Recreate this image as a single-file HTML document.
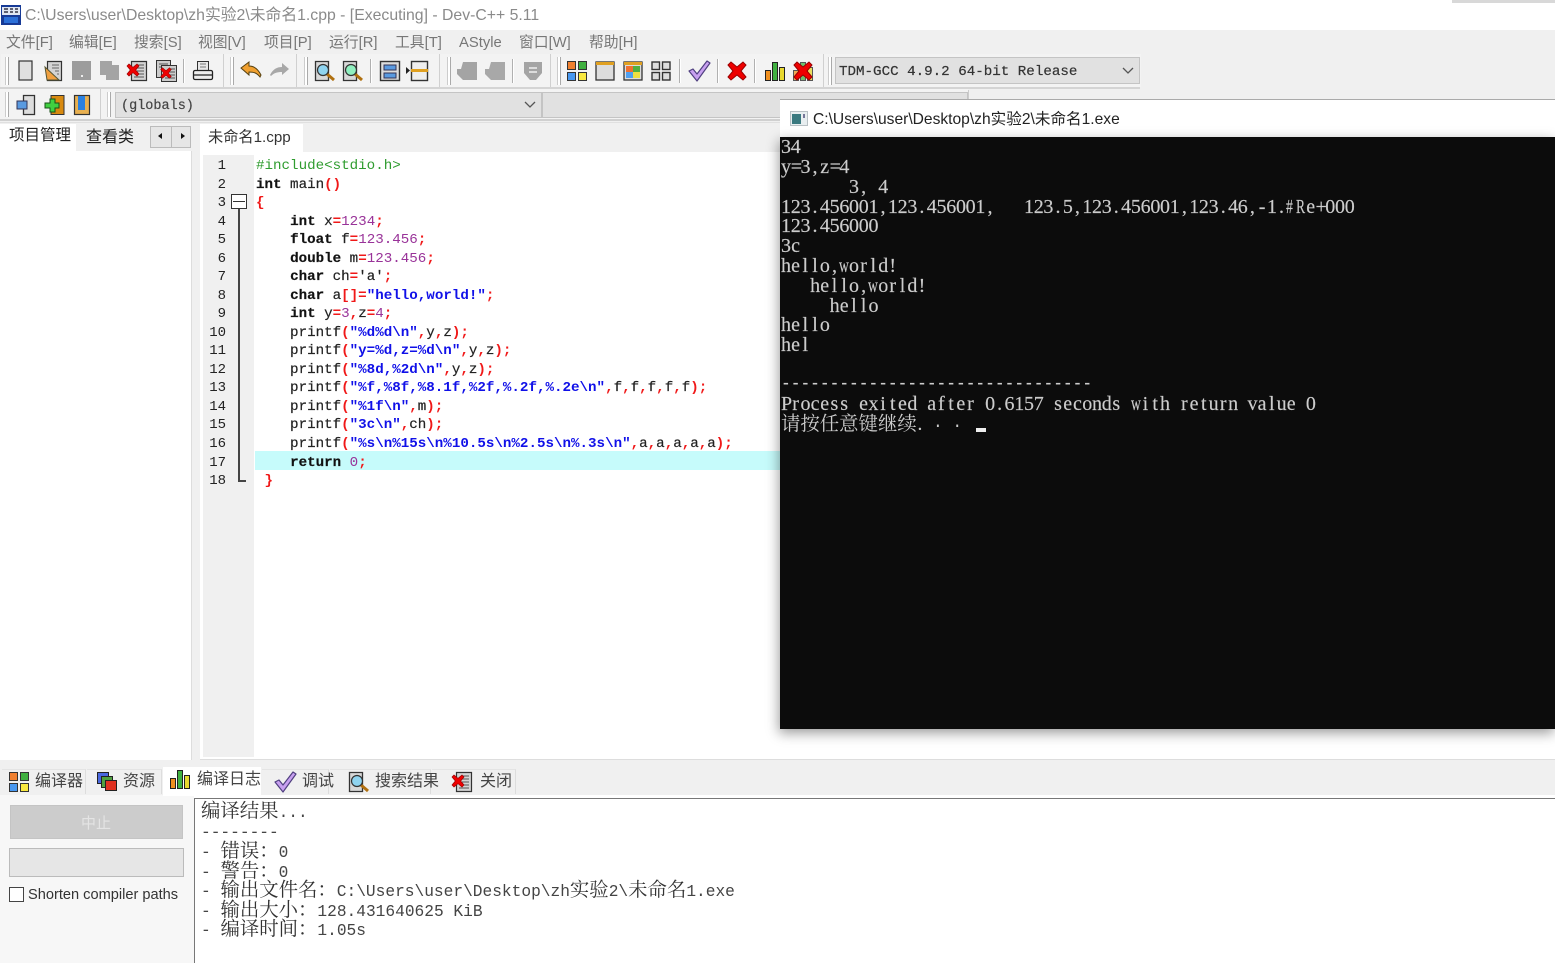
<!DOCTYPE html>
<html lang="zh"><head><meta charset="utf-8"><title>Dev-C++ 5.11</title>
<style>
html,body{margin:0;padding:0}
body{width:1555px;height:963px;overflow:hidden;background:#f0f0f0;position:relative;font-family:"Liberation Sans","Noto Sans CJK SC",sans-serif}
.a{position:absolute;white-space:pre}
svg.i{position:absolute;width:24px;height:24px;overflow:visible}
.m{top:34px;font-size:14.8px;color:#777;line-height:18px}
.sep{position:absolute;width:1px;background:#b0b0b0;height:24px;box-shadow:1px 0 0 #fff}
.grip{position:absolute;width:2px;background:#fff;border-right:1px solid #aaa;border-left:1px solid #ccc}
.end{position:absolute;width:1px;background:#d0d0d0;top:54px;height:33px}
.c{position:absolute;left:256px;font:14.2px/18.53px "Liberation Mono",monospace;color:#222;white-space:pre;-webkit-text-stroke:.2px #222}
.n{position:absolute;left:203px;width:23px;text-align:right;white-space:pre;font:14px/18.53px "Liberation Mono",monospace;color:#222}
b{font-weight:700;color:#111}
.s{color:#1010e8;font-weight:700;-webkit-text-stroke:0}.r{color:#f01818;font-weight:700;-webkit-text-stroke:0}.p{color:#993399;font-weight:400;-webkit-text-stroke:0}
.con{position:absolute;left:781px;font:20px/20px "Liberation Serif",serif;color:#ccc;white-space:pre;-webkit-text-stroke:.15px #ccc}
.con i,.con u{font-style:normal;text-decoration:none;display:inline-block;width:9.72px;text-align:center;white-space:pre}
.con u{text-align:left;transform:scaleX(.68);transform-origin:0 50%}
.dash{position:absolute;left:781px;font:20px/20px "Liberation Mono",monospace;color:#ccc;white-space:pre;transform:scaleX(.81);transform-origin:0 0}
.log{position:absolute;left:201px;font:16.2px/20px "Liberation Mono",monospace;color:#444;white-space:pre}
.log span{font:19.4px/0 "Noto Serif CJK SC",serif;color:#333}
.t{font-size:16px;color:#444;top:771px;line-height:20px}
.tabb{position:absolute;top:769px;height:25px;background:#f0f0f0;border-right:1px solid #ddd;border-top:1px solid #e4e4e4;box-sizing:border-box}
</style></head><body>
<svg width="0" height="0" style="position:absolute"><defs>
<symbol id="grid" viewBox="0 0 24 24"><g stroke="#333" stroke-width="1"><rect x="2.5" y="2.5" width="8" height="8" fill="#f08030"/><rect x="13.5" y="2.5" width="8" height="8" fill="#40b040"/><rect x="2.5" y="13.5" width="8" height="8" fill="#4898f0"/><rect x="13.5" y="13.5" width="8" height="8" fill="#f8e840"/></g></symbol>
<symbol id="bars" viewBox="0 0 24 24"><g stroke="#222" stroke-width="1"><rect x="2.5" y="11.5" width="5" height="10" fill="#f09020"/><rect x="9.5" y="3.5" width="5" height="18" fill="#40b040"/><rect x="16.5" y="8.5" width="5" height="13" fill="#e8d830"/></g></symbol>
<symbol id="check" viewBox="0 0 24 24"><path d="M2 12l4-2 4 5L20 2l3 2L10 22z" fill="#c8a0f0" stroke="#504080" stroke-width="1.2" stroke-linejoin="round"/></symbol>
<symbol id="x" viewBox="0 0 24 24"><path d="M3 6l3-3 6 5 6-5 3 3-5 6 5 6-3 3-6-5-6 5-3-3 5-6z" fill="#ee0000" stroke="#900" stroke-width="1"/></symbol>
<symbol id="doc" viewBox="0 0 24 24"><path d="M6.5 2.5h15v19h-15z" fill="#d4d4d4" stroke="#333" stroke-width="1.200"/><path d="M12 6h7M12 9h7M12 12h7M12 15h7M9 18h10" stroke="#555"/></symbol>
<symbol id="find" viewBox="0 0 24 24"><path d="M3.500 2.500h13v19h-13z" fill="#d8d8d8" stroke="#333" stroke-width="1.300"/><path d="M15 15l7 6" stroke="#b07010" stroke-width="3"/><circle cx="11" cy="11" r="5.500" fill="currentColor" stroke="#333" stroke-width="1.200"/></symbol>
</defs></svg>

<!-- title bar -->
<div class="a" style="left:0;top:0;width:1555px;height:30px;background:#fff"></div>
<div class="a" style="left:1452px;top:0;width:103px;height:3px;background:#d8d8d8"></div>
<svg class="i" style="left:1px;top:5px;width:20px;height:20px" viewBox="0 0 20 20"><rect width="20" height="20" fill="#173a96"/><rect x="1" y="2" width="18" height="8" fill="#dfe6f2"/><rect x="3" y="12" width="14" height="6" fill="#2c70d8"/><path d="M3 4h4M9 4h3M14 4h3M3 7h4M9 7h3M14 7h3" stroke="#334" stroke-width="1.500"/></svg>
<div class="a" style="left:25px;top:6px;font-size:15.8px;line-height:19px;color:#8a8a8a">C:\Users\user\Desktop\zh实验2\未命名1.cpp - [Executing] - Dev-C++ 5.11</div>

<!-- menu -->
<div class="a m" style="left:6px">文件[F]</div><div class="a m" style="left:69px">编辑[E]</div><div class="a m" style="left:134px">搜索[S]</div><div class="a m" style="left:198px">视图[V]</div><div class="a m" style="left:264px">项目[P]</div><div class="a m" style="left:329px">运行[R]</div><div class="a m" style="left:395px">工具[T]</div><div class="a m" style="left:459px">AStyle</div><div class="a m" style="left:519px">窗口[W]</div><div class="a m" style="left:589px">帮助[H]</div>

<!-- toolbar 1 -->
<div class="a" style="left:0;top:87px;width:1140px;height:2px;background:#d4d4d4"></div>
<div class="a" style="left:0;top:119px;width:968px;height:2px;background:#d0d0d0"></div>
<div class="a" style="left:968px;top:90px;width:1px;height:30px;background:#ccc"></div>
<div class="a" style="left:1px;top:54px;width:1140px;height:33px;background:#f3f3f3"></div>
<div class="grip" style="left:5px;top:57px;height:28px"></div><div class="grip" style="left:230px;top:57px;height:28px"></div><div class="grip" style="left:304px;top:57px;height:28px"></div><div class="grip" style="left:447px;top:57px;height:28px"></div><div class="grip" style="left:557px;top:57px;height:28px"></div><div class="grip" style="left:828px;top:57px;height:28px"></div>
<div class="end" style="left:223px"></div><div class="end" style="left:296px"></div><div class="end" style="left:439px"></div><div class="end" style="left:550px"></div><div class="end" style="left:823px"></div>
<div class="sep" style="left:183px;top:59px"></div><div class="sep" style="left:370px;top:59px"></div><div class="sep" style="left:512px;top:59px"></div><div class="sep" style="left:679px;top:59px"></div><div class="sep" style="left:717px;top:59px"></div><div class="sep" style="left:754px;top:59px"></div>

<svg class="i" style="left:13px;top:59px" viewBox="0 0 24 24"><rect x="6" y="2" width="13" height="19" fill="#e0e0e0" stroke="#333" stroke-width="1.200"/></svg>
<svg class="i" style="left:41px;top:59px" viewBox="0 0 24 24"><path d="M6.500 2.500h14v19h-14z" fill="#d4d4d4" stroke="#333" stroke-width="1.200"/><path d="M11 6h7M11 9h7M14 12h4M16 15h2" stroke="#666"/><path d="M4 8l14 13H6z" fill="#f0a040" stroke="#553" stroke-width="1"/></svg>
<svg class="i" style="left:69px;top:59px" viewBox="0 0 24 24"><path d="M3 2h19v19H3z" fill="#9c9c9c"/><rect x="12" y="16" width="2" height="2" fill="#eee"/></svg>
<svg class="i" style="left:97px;top:59px" viewBox="0 0 24 24"><path d="M3 2h12v4h7v15H9v-5H3z" fill="#a4a4a4"/></svg>
<svg class="i" style="left:125px;top:59px" viewBox="0 0 24 24"><use href="#doc"/><use href="#x" x="0" y="3" width="16" height="16"/></svg>
<svg class="i" style="left:154px;top:59px" viewBox="0 0 24 24"><path d="M2.500 1.500h14v17h-14z" fill="#ccc" stroke="#333"/><path d="M5 5h9M5 8h3" stroke="#555"/><path d="M7.500 6.500h15v16h-15z" fill="#ccc" stroke="#333"/><path d="M15 10h6M15 13h6M15 16h6M11 19h10" stroke="#555"/><use href="#x" x="5" y="7" width="14" height="14"/></svg>
<svg class="i" style="left:191px;top:59px" viewBox="0 0 24 24"><path d="M6.500 2.500h11v9h-11z" fill="#e8e8e8" stroke="#333"/><path d="M9 5h6M9 8h6" stroke="#777"/><rect x="2.500" y="11.500" width="19" height="9" rx="1.500" fill="#eee" stroke="#222" stroke-width="1.300"/><path d="M3 16h18" stroke="#222" stroke-width="1.300"/></svg>
<svg class="i" style="left:239px;top:59px" viewBox="0 0 24 24"><path d="M2 9l8-6v4c5 0 9 3 12 9l-1 2c-3-4-6-5-11-5v3z" fill="#f0a030" stroke="#554010" stroke-width="1"/></svg>
<svg class="i" style="left:267px;top:59px" viewBox="0 0 24 24"><path d="M22 10l-7-6v4C10 8 6 10 3 16l1 1c3-3 6-4 11-4v3z" fill="#a8a8a8"/></svg>
<svg class="i" style="left:312px;top:59px;color:#8fd4f0" viewBox="0 0 24 24"><use href="#find"/></svg>
<svg class="i" style="left:340px;top:59px;color:#90f0c0" viewBox="0 0 24 24"><use href="#find"/></svg>
<svg class="i" style="left:378px;top:59px" viewBox="0 0 24 24"><rect x="2.500" y="2.500" width="19" height="19" fill="#ddd" stroke="#333" stroke-width="1.400"/><rect x="6" y="6" width="12" height="5" fill="#5a9ae0" stroke="#335"/><rect x="6" y="14" width="12" height="5" fill="#5a9ae0" stroke="#335"/></svg>
<svg class="i" style="left:406px;top:59px" viewBox="0 0 24 24"><rect x="5.500" y="2.500" width="16" height="19" fill="#eee" stroke="#333" stroke-width="1.400"/><rect x="5" y="10" width="17" height="3" fill="#e0a020"/><path d="M0 8l4 3.500L0 15z" fill="#222"/></svg>
<svg class="i" style="left:455px;top:59px" viewBox="0 0 24 24"><path d="M8 3h14v18H8l-6-6v-5l4 0z" fill="#a4a4a4"/></svg>
<svg class="i" style="left:483px;top:59px" viewBox="0 0 24 24"><path d="M8 3h14v18H8l-6-6v-5l4 0z" fill="#a8a8a8"/></svg>
<svg class="i" style="left:521px;top:59px" viewBox="0 0 24 24"><path d="M3 3h18v11l-6 7H9l-6-7z" fill="#a4a4a4"/><path d="M8 9h8M8 13h8" stroke="#eee" stroke-width="1.500"/></svg>
<svg class="i" style="left:565px;top:59px"><use href="#grid"/></svg>
<svg class="i" style="left:593px;top:59px" viewBox="0 0 24 24"><rect x="3" y="3" width="18" height="18" fill="#ddd" stroke="#333" stroke-width="1.300"/><rect x="3" y="3" width="18" height="3" fill="#e0a020"/></svg>
<svg class="i" style="left:621px;top:59px" viewBox="0 0 24 24"><rect x="3" y="3" width="18" height="18" fill="#ddd" stroke="#333" stroke-width="1.300"/><rect x="3" y="3" width="18" height="3" fill="#e0a020"/><rect x="5" y="7" width="7" height="6" fill="#f07030"/><rect x="12" y="7" width="7" height="6" fill="#50b040"/><rect x="5" y="13" width="7" height="6" fill="#50a0f0"/><rect x="12" y="13" width="7" height="6" fill="#f0e040"/></svg>
<svg class="i" style="left:649px;top:59px" viewBox="0 0 24 24"><g fill="#ddd" stroke="#333" stroke-width="1.400"><rect x="3" y="3" width="7.500" height="7.500"/><rect x="13.500" y="3" width="7.500" height="7.500"/><rect x="3" y="13.500" width="7.500" height="7.500"/><rect x="13.500" y="13.500" width="7.500" height="7.500"/></g></svg>
<svg class="i" style="left:687px;top:59px"><use href="#check"/></svg>
<svg class="i" style="left:725px;top:59px"><use href="#x"/></svg>
<svg class="i" style="left:763px;top:59px"><use href="#bars"/></svg>
<svg class="i" style="left:791px;top:59px" viewBox="0 0 24 24"><use href="#bars" opacity=".75"/><use href="#x"/></svg>

<div class="a" style="left:835px;top:57px;width:305px;height:27px;background:#e1e1e1;border:1px solid #c4c4c4;box-sizing:border-box"></div>
<div class="a" style="left:839px;top:63px;font:14.2px/18px 'Liberation Mono',monospace;color:#333;-webkit-text-stroke:.2px #333">TDM-GCC 4.9.2 64-bit Release</div>
<svg class="i" style="left:1122px;top:66px;width:12px;height:10px" viewBox="0 0 12 10"><path d="M1 2l5 5 5-5" fill="none" stroke="#555" stroke-width="1.300"/></svg>

<!-- toolbar 2 -->
<div class="a" style="left:0;top:89px;width:968px;height:30px;background:#f3f3f3"></div>
<div class="grip" style="left:5px;top:92px;height:25px"></div><div class="a" style="left:100px;top:89px;width:1px;height:30px;background:#d0d0d0"></div><div class="grip" style="left:107px;top:92px;height:25px"></div>
<svg class="i" style="left:14px;top:93px" viewBox="0 0 24 24"><path d="M9.500 2.500h11v19h-11z" fill="#ddd" stroke="#333" stroke-width="1.300"/><rect x="3" y="8" width="10" height="8" fill="#5a9ae0" stroke="#335"/></svg>
<svg class="i" style="left:43px;top:93px" viewBox="0 0 24 24"><rect x="8" y="2.500" width="13" height="19" fill="#d88a10" stroke="#333"/><path d="M7 6h5v4h4v5h-4v4H7v-4H2v-5h5z" fill="#40d040" stroke="#185018"/></svg>
<svg class="i" style="left:70px;top:93px" viewBox="0 0 24 24"><rect x="4.500" y="2.500" width="15" height="19" fill="#e8b050" stroke="#333" stroke-width="1.200"/><rect x="8" y="3" width="7" height="14" fill="#2a80e0"/></svg>
<div class="a" style="left:115px;top:92px;width:427px;height:26px;background:#e1e1e1;border:1px solid #c4c4c4;box-sizing:border-box"></div>
<div class="a" style="left:542px;top:92px;width:426px;height:26px;background:#e1e1e1;border:1px solid #c4c4c4;box-sizing:border-box"></div>
<div class="a" style="left:121px;top:98px;font:13.5px/18px 'Liberation Mono',monospace;color:#444;-webkit-text-stroke:.2px #444">(globals)</div>
<svg class="i" style="left:524px;top:100px;width:12px;height:10px" viewBox="0 0 12 10"><path d="M1 2l5 5 5-5" fill="none" stroke="#555" stroke-width="1.300"/></svg>

<!-- left panel and tabs -->
<div class="a" style="left:0;top:122px;width:1555px;height:1px;background:#e0e0e0"></div>
<div class="a" style="left:0;top:124px;width:76px;height:28px;background:#fff"></div>
<div class="a" style="left:9px;top:126px;font-size:15.5px;line-height:20px;color:#222">项目管理</div>
<div class="a" style="left:86px;top:128px;font-size:16px;line-height:20px;color:#222">查看类</div>
<div class="a" style="left:150px;top:126px;width:41px;height:22px;background:#e6e6e6;border:1px solid #bbb;box-sizing:border-box"></div>
<div class="a" style="left:171px;top:126px;width:1px;height:22px;background:#bbb"></div>
<div class="a" style="left:158px;top:133px;width:0;height:0;border:3.500px solid transparent;border-right:4px solid #111;border-left:0"></div>
<div class="a" style="left:181px;top:133px;width:0;height:0;border:3.500px solid transparent;border-left:4px solid #111;border-right:0"></div>
<div class="a" style="left:200px;top:124px;width:103px;height:28px;background:#fff"></div>
<div class="a" style="left:208px;top:128px;font-size:15.2px;line-height:20px;color:#333">未命名1.cpp</div>
<div class="a" style="left:0;top:151px;width:191px;height:609px;background:#fff;border-right:1px solid #ddd"></div>

<!-- editor -->
<div class="a" style="left:200px;top:152px;width:1355px;height:608px;background:#fff;border-bottom:1px solid #ddd;box-sizing:border-box"></div>
<div class="a" style="left:203px;top:155px;width:51px;height:602px;background:#f0f0f0"></div>
<div class="a" style="left:255px;top:451px;width:525px;height:19px;background:#c6fbfb"></div>
<div class="n" style="top:157px">1
2
3
4
5
6
7
8
9
10
11
12
13
14
15
16
17
18</div>
<div class="a" style="left:231px;top:194px;width:16px;height:15px;background:#fff;border:1.500px solid #333;box-sizing:border-box"></div>
<div class="a" style="left:233px;top:200.5px;width:12px;height:1.3px;background:#333"></div>
<div class="a" style="left:238px;top:209px;width:1.5px;height:271px;background:#444"></div>
<div class="a" style="left:238px;top:480px;width:8px;height:1.5px;background:#444"></div>
<div class="c" style="top:157px"><span style="color:#2f9c2f;-webkit-text-stroke:0">#include&lt;stdio.h&gt;</span>
<b>int</b> main<span class="r">()</span>
<span class="r">{</span>
    <b>int</b> x<span class="r">=</span><span class="p">1234</span><span class="r">;</span>
    <b>float</b> f<span class="r">=</span><span class="p">123.456</span><span class="r">;</span>
    <b>double</b> m<span class="r">=</span><span class="p">123.456</span><span class="r">;</span>
    <b>char</b> ch<span class="r">=</span>'a'<span class="r">;</span>
    <b>char</b> a<span class="r">[]=</span><span class="s">"hello,world!"</span><span class="r">;</span>
    <b>int</b> y<span class="r">=</span><span class="p">3</span><span class="r">,</span>z<span class="r">=</span><span class="p">4</span><span class="r">;</span>
    printf<span class="r">(</span><span class="s">"%d%d\n"</span><span class="r">,</span>y<span class="r">,</span>z<span class="r">);</span>
    printf<span class="r">(</span><span class="s">"y=%d,z=%d\n"</span><span class="r">,</span>y<span class="r">,</span>z<span class="r">);</span>
    printf<span class="r">(</span><span class="s">"%8d,%2d\n"</span><span class="r">,</span>y<span class="r">,</span>z<span class="r">);</span>
    printf<span class="r">(</span><span class="s">"%f,%8f,%8.1f,%2f,%.2f,%.2e\n"</span><span class="r">,</span>f<span class="r">,</span>f<span class="r">,</span>f<span class="r">,</span>f<span class="r">,</span>f<span class="r">);</span>
    printf<span class="r">(</span><span class="s">"%1f\n"</span><span class="r">,</span>m<span class="r">);</span>
    printf<span class="r">(</span><span class="s">"3c\n"</span><span class="r">,</span>ch<span class="r">);</span>
    printf<span class="r">(</span><span class="s">"%s\n%15s\n%10.5s\n%2.5s\n%.3s\n"</span><span class="r">,</span>a<span class="r">,</span>a<span class="r">,</span>a<span class="r">,</span>a<span class="r">,</span>a<span class="r">);</span>
    <b>return</b> <span class="p">0</span><span class="r">;</span>
 <span class="r">}</span></div>

<!-- console window -->
<div class="a" style="left:780px;top:99px;width:775px;height:1px;background:#aaa"></div>
<div class="a" style="left:780px;top:100px;width:775px;height:37px;background:#fff"></div>
<div class="a" style="left:780px;top:137px;width:775px;height:592px;background:#0c0c0c;box-shadow:-1px 4px 12px rgba(0,0,0,.4)"></div>
<svg class="i" style="left:790px;top:111px;width:18px;height:15px" viewBox="0 0 18 15"><rect x=".5" y=".5" width="17" height="14" fill="#e8eef0" stroke="#b8c0c4"/><rect x="2" y="3" width="9" height="10" fill="#3a7a80"/><rect x="13" y="3" width="2" height="4" fill="#779"/></svg>
<div class="a" style="left:813px;top:110px;font-size:15.6px;line-height:19px;color:#222">C:\Users\user\Desktop\zh实验2\未命名1.exe</div>
<div class="con" style="top:137px"><i>3</i><i>4</i></div>
<div class="con" style="top:157px"><i>y</i><i>=</i><i>3</i><i>,</i><i>z</i><i>=</i><i>4</i></div>
<div class="con" style="top:177px"><i> </i><i> </i><i> </i><i> </i><i> </i><i> </i><i> </i><i>3</i><i>,</i><i> </i><i>4</i></div>
<div class="con" style="top:196.5px"><i>1</i><i>2</i><i>3</i><i>.</i><i>4</i><i>5</i><i>6</i><i>0</i><i>0</i><i>1</i><i>,</i><i>1</i><i>2</i><i>3</i><i>.</i><i>4</i><i>5</i><i>6</i><i>0</i><i>0</i><i>1</i><i>,</i><i> </i><i> </i><i> </i><i>1</i><i>2</i><i>3</i><i>.</i><i>5</i><i>,</i><i>1</i><i>2</i><i>3</i><i>.</i><i>4</i><i>5</i><i>6</i><i>0</i><i>0</i><i>1</i><i>,</i><i>1</i><i>2</i><i>3</i><i>.</i><i>4</i><i>6</i><i>,</i><i>-</i><i>1</i><i>.</i><u>#</u><u>R</u><i>e</i><i>+</i><i>0</i><i>0</i><i>0</i></div>
<div class="con" style="top:216px"><i>1</i><i>2</i><i>3</i><i>.</i><i>4</i><i>5</i><i>6</i><i>0</i><i>0</i><i>0</i></div>
<div class="con" style="top:236px"><i>3</i><i>c</i></div>
<div class="con" style="top:256px"><i>h</i><i>e</i><i>l</i><i>l</i><i>o</i><i>,</i><u>w</u><i>o</i><i>r</i><i>l</i><i>d</i><i>!</i></div>
<div class="con" style="top:276px"><i> </i><i> </i><i> </i><i>h</i><i>e</i><i>l</i><i>l</i><i>o</i><i>,</i><u>w</u><i>o</i><i>r</i><i>l</i><i>d</i><i>!</i></div>
<div class="con" style="top:296px"><i> </i><i> </i><i> </i><i> </i><i> </i><i>h</i><i>e</i><i>l</i><i>l</i><i>o</i></div>
<div class="con" style="top:315px"><i>h</i><i>e</i><i>l</i><i>l</i><i>o</i></div>
<div class="con" style="top:335px"><i>h</i><i>e</i><i>l</i></div>
<div class="dash" style="top:375px">--------------------------------</div>
<div class="con" style="top:394px"><i>P</i><i>r</i><i>o</i><i>c</i><i>e</i><i>s</i><i>s</i><i> </i><i>e</i><i>x</i><i>i</i><i>t</i><i>e</i><i>d</i><i> </i><i>a</i><i>f</i><i>t</i><i>e</i><i>r</i><i> </i><i>0</i><i>.</i><i>6</i><i>1</i><i>5</i><i>7</i><i> </i><i>s</i><i>e</i><i>c</i><i>o</i><i>n</i><i>d</i><i>s</i><i> </i><u>w</u><i>i</i><i>t</i><i>h</i><i> </i><i>r</i><i>e</i><i>t</i><i>u</i><i>r</i><i>n</i><i> </i><i>v</i><i>a</i><i>l</i><i>u</i><i>e</i><i> </i><i>0</i></div>
<div class="a" style="left:781px;top:412px;font:19.4px/20px 'Noto Serif CJK SC',serif;color:#ccc">请按任意键继续.</div>
<div class="a" style="left:933px;top:413px;font:16.2px/20px 'Liberation Mono',monospace;color:#ccc">. .</div>
<div class="a" style="left:976px;top:428px;width:10px;height:4px;background:#eee"></div>

<!-- bottom tabs -->
<div class="a" style="left:0;top:795px;width:1555px;height:168px;background:#fff"></div>
<div class="a" style="left:0;top:795px;width:194px;height:168px;background:#f7f7f7"></div>
<div class="tabb" style="left:2px;width:84px"></div><div class="tabb" style="left:87px;width:75px"></div>
<div class="a" style="left:163px;top:767px;width:98px;height:29px;background:#fff"></div>
<div class="tabb" style="left:262px;width:67px"></div><div class="tabb" style="left:330px;width:101px"></div><div class="tabb" style="left:432px;width:84px"></div>
<svg class="i" style="left:7px;top:770px"><use href="#grid"/></svg><div class="a t" style="left:35px;top:772px">编译器</div>
<svg class="i" style="left:95px;top:769px" viewBox="0 0 24 24"><rect x="2.500" y="3.500" width="11" height="11" fill="#4a68e0" stroke="#222"/><rect x="6.500" y="7.500" width="11" height="11" fill="#50a040" stroke="#222"/><rect x="10.500" y="11.500" width="11" height="10" fill="#e03020" stroke="#222"/></svg><div class="a t" style="left:123px;top:772px">资源</div>
<svg class="i" style="left:168px;top:767px"><use href="#bars"/></svg><div class="a t" style="left:197px;top:770px">编译日志</div>
<svg class="i" style="left:273px;top:770px"><use href="#check"/></svg><div class="a t" style="left:302px;top:772px">调试</div>
<svg class="i" style="left:346px;top:770px;color:#8fd4f0"><use href="#find"/></svg><div class="a t" style="left:375px;top:772px">搜索结果</div>
<svg class="i" style="left:450px;top:770px"><use href="#doc"/><use href="#x" x="0" y="3" width="16" height="16"/></svg><div class="a t" style="left:480px;top:772px">关闭</div>

<!-- bottom left -->
<div class="a" style="left:10px;top:805px;width:173px;height:34px;background:#ccc;border:1px solid #c4c4c4;box-sizing:border-box"></div>
<div class="a" style="left:81px;top:815px;font-size:15px;line-height:18px;color:#e4e4e4">中止</div>
<div class="a" style="left:9px;top:848px;width:175px;height:29px;background:#e6e6e6;border:1px solid #bbb;box-sizing:border-box"></div>
<div class="a" style="left:9px;top:887px;width:15px;height:15px;background:#fff;border:1px solid #444;box-sizing:border-box"></div>
<div class="a" style="left:28px;top:886px;font-size:14.6px;line-height:18px;color:#333">Shorten compiler paths</div>

<!-- log -->
<div class="a" style="left:194px;top:798px;width:1361px;height:165px;background:#fff;border-left:1.5px solid #777;border-top:1.5px solid #777;box-sizing:border-box"></div>
<div class="log" style="top:803px"><span>编译结果</span>...</div>
<div class="log" style="top:823px">--------</div>
<div class="log" style="top:843px">- <span>错误：</span>0</div>
<div class="log" style="top:863px">- <span>警告：</span>0</div>
<div class="log" style="top:882px">- <span>输出文件名：</span>C:\Users\user\Desktop\zh<span>实验</span>2\<span>未命名</span>1.exe</div>
<div class="log" style="top:902px">- <span>输出大小：</span>128.431640625 KiB</div>
<div class="log" style="top:921px">- <span>编译时间：</span>1.05s</div>
</body></html>
